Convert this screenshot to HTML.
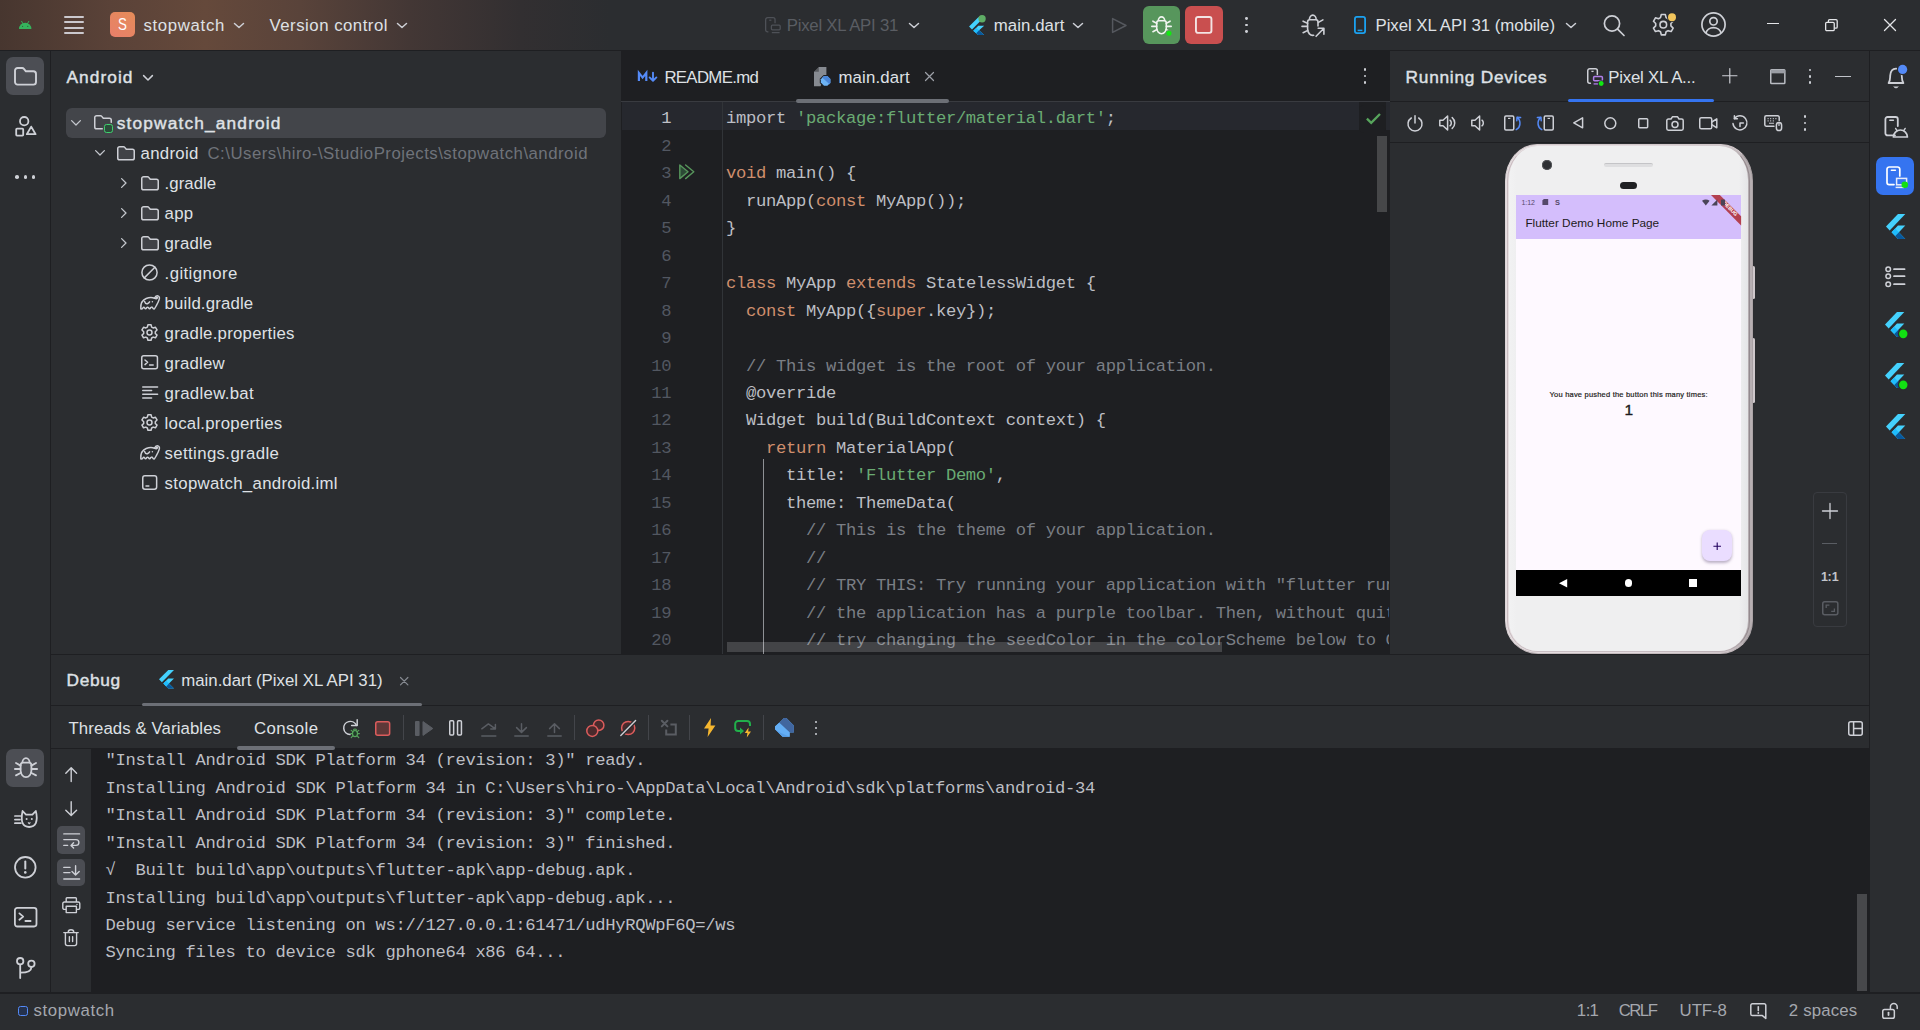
<!DOCTYPE html>
<html><head><meta charset="utf-8"><title>stopwatch - main.dart</title>
<style>
html,body{margin:0;padding:0;background:#2b2d30;overflow:hidden}
body{width:1920px;height:1030px;position:relative;font-family:"Liberation Sans",sans-serif;color:#dfe1e5}
.b{position:absolute;display:block}
.t{position:absolute;white-space:pre;line-height:24px;height:24px;font-family:"Liberation Sans",sans-serif}
.m{font-family:"Liberation Mono",monospace}
.k{color:#cf8e6d}.s{color:#6aab73}.c{color:#7a7e85}
svg{overflow:visible}
</style></head><body>
<div class="b" style="left:0px;top:0px;width:1920px;height:50px;background:#2b2d30;background:linear-gradient(90deg,#47362f 0px,#5a4238 110px,#65493b 205px,#59433a 300px,#433735 410px,#322f31 520px,#2b2d30 610px)"></div>
<div class="b" style="left:0px;top:50px;width:1920px;height:1px;background:#1e1f22;"></div>
<div class="b" style="left:0px;top:51px;width:50px;height:942px;background:#2b2d30;"></div>
<div class="b" style="left:50px;top:51px;width:1px;height:942px;background:#1e1f22;"></div>
<div class="b" style="left:1870px;top:51px;width:50px;height:942px;background:#2b2d30;"></div>
<div class="b" style="left:1869px;top:51px;width:1px;height:942px;background:#1e1f22;"></div>
<div class="b" style="left:51px;top:51px;width:570px;height:603px;background:#2b2d30;"></div>
<div class="b" style="left:621px;top:51px;width:769px;height:603px;background:#1e1f22;"></div>
<div class="b" style="left:621px;top:101px;width:769px;height:1px;background:#393b40;"></div>
<div class="b" style="left:1390px;top:51px;width:479px;height:603px;background:#2b2d30;"></div>
<div class="b" style="left:1390px;top:101px;width:479px;height:1px;background:#1e1f22;"></div>
<div class="b" style="left:1390px;top:142.3px;width:479px;height:1px;background:#1e1f22;"></div>
<div class="b" style="left:51px;top:654px;width:1818px;height:1px;background:#1e1f22;"></div>
<div class="b" style="left:51px;top:655px;width:1818px;height:338px;background:#2b2d30;"></div>
<div class="b" style="left:51px;top:705px;width:1818px;height:1px;background:#1e1f22;"></div>
<div class="b" style="left:51px;top:748px;width:1818px;height:1px;background:#1e1f22;"></div>
<div class="b" style="left:91px;top:749px;width:1778px;height:244px;background:#1e1f22;"></div>
<div class="b" style="left:0px;top:992px;width:1920px;height:2px;background:#1e1f22;"></div>
<div class="b" style="left:0px;top:993.5px;width:1920px;height:36.5px;background:#2b2d30;"></div>
<svg class="b" style="left:18.8px;top:21px;" width="12.4" height="8" viewBox="0 0 12.4 8" fill="none"><path d="M0 8 A6.2 6.2 0 0 1 12.4 8 Z" fill="#35b35c"></path><path d="M2.6 0.3 L4 2.8 M9.8 0.3 L8.4 2.8" stroke="#35b35c" stroke-width="0.9" stroke-linecap="round"></path><circle cx="3.6" cy="5.3" r="0.6" fill="#2a5a3a"></circle><circle cx="8.8" cy="5.3" r="0.6" fill="#2a5a3a"></circle></svg>
<div class="b" style="left:63.8px;top:15.600000000000001px;width:20px;height:2px;background:#cbc8cd;border-radius:1px"></div>
<div class="b" style="left:63.8px;top:21.2px;width:20px;height:2px;background:#cbc8cd;border-radius:1px"></div>
<div class="b" style="left:63.8px;top:26.8px;width:20px;height:2px;background:#cbc8cd;border-radius:1px"></div>
<div class="b" style="left:63.8px;top:32.4px;width:20px;height:2px;background:#cbc8cd;border-radius:1px"></div>
<div class="b" style="left:110px;top:12px;width:25px;height:25px;background:#e8825e;border-radius:5px;background:linear-gradient(35deg,#e87f6b,#e58c58)"></div>
<span class="t" style="left:117.6px;top:12.5px;font-size:16.6px;color:#fff;transform:scaleX(0.8);transform-origin:0 0">S</span>
<span class="t" style="left: 143.5px; top: 13.5px; font-size: 16.8px; color: rgb(223, 225, 229); letter-spacing: 0.655px;">stopwatch</span>
<svg class="b" style="left:234px;top:22.7px;" width="10" height="5" viewBox="0 0 10 5" fill="none"><path d="M0.5 0.5 L5.0 4.5 L9.5 0.5" stroke="#ced0d6" stroke-width="1.5" stroke-linecap="round" stroke-linejoin="round"></path></svg>
<span class="t" style="left: 269.5px; top: 13.5px; font-size: 16.8px; color: rgb(223, 225, 229); letter-spacing: 0.499px;">Version control</span>
<svg class="b" style="left:397px;top:22.7px;" width="10" height="5" viewBox="0 0 10 5" fill="none"><path d="M0.5 0.5 L5.0 4.5 L9.5 0.5" stroke="#ced0d6" stroke-width="1.5" stroke-linecap="round" stroke-linejoin="round"></path></svg>
<svg class="b" style="left:764.8px;top:17px;" width="17" height="18" viewBox="0 0 17 18" fill="none"><path d="M3.4 14.9 H2.65 a2 2 0 0 1 -2 -2 V2.65 a2 2 0 0 1 2 -2 h5.4 a2 2 0 0 1 2 2 V6.2" stroke="#4e5157" stroke-width="1.3"></path><path d="M4.2 3.2 H6.4" stroke="#4e5157" stroke-width="1.2"></path><rect x="6.4" y="8.2" width="8.8" height="4.6" rx="1" stroke="#4e5157" stroke-width="1.3"></rect><path d="M6.8 15.6 H14.6" stroke="#4e5157" stroke-width="1.3"></path></svg>
<span class="t" style="left: 786.8px; top: 13.5px; font-size: 16.8px; color: rgb(90, 93, 99); letter-spacing: -0.254px;">Pixel XL API 31</span>
<svg class="b" style="left:909px;top:22.7px;" width="10" height="5" viewBox="0 0 10 5" fill="none"><path d="M0.5 0.5 L5.0 4.5 L9.5 0.5" stroke="#ced0d6" stroke-width="1.5" stroke-linecap="round" stroke-linejoin="round"></path></svg>
<svg class="b" style="left:967.6px;top:14.8px;transform:scale(1.05);transform-origin:0 0" width="18" height="19" viewBox="0 0 18 19" fill="none"><path d="M9.8 2.2 L1 11 L3.8 13.8 L15.4 2.2 Z" fill="#44d1fd"></path><path d="M9.8 10.3 L5 15.1 L9.8 19 H15.4 L10.6 14.6 L15.4 10.3 Z" fill="#44d1fd"></path><path d="M5 15.1 L7.8 12.3 L10.6 14.6 L9.8 19 Z" fill="#1fbcfd"></path><path d="M7.8 17.4 L9.8 19 H15.4 L10.6 14.6 Z" fill="#08589c"></path><circle cx="13.4" cy="3.6" r="3.5" fill="#5fad65"></circle></svg>
<span class="t" style="left: 993.8px; top: 13.5px; font-size: 16.8px; color: rgb(223, 225, 229); letter-spacing: 0.068px;">main.dart</span>
<svg class="b" style="left:1073px;top:22.7px;" width="10" height="5" viewBox="0 0 10 5" fill="none"><path d="M0.5 0.5 L5.0 4.5 L9.5 0.5" stroke="#ced0d6" stroke-width="1.5" stroke-linecap="round" stroke-linejoin="round"></path></svg>
<svg class="b" style="left:1111px;top:16.8px;" width="17" height="17" viewBox="0 0 17 17" fill="none"><path d="M1.6 1.6 L15 8.5 L1.6 15.4 Z" stroke="#55585e" stroke-width="1.5" stroke-linejoin="round"></path></svg>
<div class="b" style="left:1142.5px;top:6px;width:37.5px;height:38px;background:#57965c;border-radius:6px"></div>
<div class="b" style="left:1185px;top:6px;width:37.5px;height:38px;background:#c94f4f;border-radius:6px"></div>
<svg class="b" style="left:1150.8px;top:15.6px;" width="21" height="19" viewBox="0 0 21 19" fill="none"><path d="M5.7 7 Q5.7 4.7 7.7 4.7 H13.3 Q15.3 4.7 15.3 7 V12 A4.8 5.7 0 0 1 5.7 12 Z" stroke="#f0f4f0" stroke-width="1.6"></path><path d="M7.3 4.7 A3.2 3.8 0 0 1 13.7 4.7" stroke="#f0f4f0" stroke-width="1.6"></path><path d="M0.8 10.4 H5.6 M15.4 10.4 H20.2 M1.9 5.2 L5.8 7.4 M19.1 5.2 L15.2 7.4 M1.9 15.7 L6 13.5 M19.1 15.7 L15 13.5" stroke="#f0f4f0" stroke-width="1.6" stroke-linecap="round"></path><circle cx="18" cy="17.3" r="3.4" fill="#57965c"></circle><circle cx="18" cy="17.3" r="2.5" fill="#12e812"></circle></svg>
<svg class="b" style="left:1195.2px;top:16.1px;" width="17.4" height="17.8" viewBox="0 0 17.4 17.8" fill="none"><rect x="0.95" y="0.95" width="15.5" height="15.9" rx="2" stroke="#f3e4e4" stroke-width="1.9"></rect></svg>
<div class="b" style="left:1244.8px;top:17.1px;width:2.8px;height:2.8px;background:#ced0d6;border-radius:50%"></div>
<div class="b" style="left:1244.8px;top:23.6px;width:2.8px;height:2.8px;background:#ced0d6;border-radius:50%"></div>
<div class="b" style="left:1244.8px;top:30.1px;width:2.8px;height:2.8px;background:#ced0d6;border-radius:50%"></div>
<svg class="b" style="left:1300.6px;top:13.6px;" width="24" height="23" viewBox="0 0 24 23" fill="none"><path d="M17 12 V8 Q17 5.7 15 5.7 H8.6 Q6.6 5.7 6.6 8 V15 A5.2 6.3 0 0 0 12.6 21.3" stroke="#ced0d6" stroke-width="1.6" stroke-linecap="round"></path><path d="M8.4 5.7 A3.4 4.6 0 0 1 15.2 5.7" stroke="#ced0d6" stroke-width="1.6"></path><path d="M1 12.4 H6.4 M2.1 7.2 L6.6 9.4 M2.1 18.7 L6.8 16.4 M21.9 5.9 L17.4 8.4" stroke="#ced0d6" stroke-width="1.6" stroke-linecap="round"></path><path d="M15.1 22.3 L22.7 14.5 M17.2 14.3 H22.9 V20.2" stroke="#ced0d6" stroke-width="1.6" stroke-linecap="round" stroke-linejoin="round"></path></svg>
<svg class="b" style="left:1354px;top:16px;" width="12" height="18" viewBox="0 0 12 18" fill="none"><rect x="0.9" y="0.9" width="10.2" height="16.2" rx="2" stroke="#1ba1f0" stroke-width="1.8"></rect><path d="M3.6 14.4 H8.4" stroke="#1ba1f0" stroke-width="1.5"></path></svg>
<span class="t" style="left: 1375.5px; top: 13.5px; font-size: 16.8px; color: rgb(223, 225, 229); letter-spacing: -0.036px;">Pixel XL API 31 (mobile)</span>
<svg class="b" style="left:1566px;top:22.7px;" width="10" height="5" viewBox="0 0 10 5" fill="none"><path d="M0.5 0.5 L5.0 4.5 L9.5 0.5" stroke="#ced0d6" stroke-width="1.5" stroke-linecap="round" stroke-linejoin="round"></path></svg>
<svg class="b" style="left:1603px;top:14px;" width="22" height="22" viewBox="0 0 22 22" fill="none"><circle cx="9" cy="9.5" r="7.6" stroke="#ced0d6" stroke-width="1.7"></circle><path d="M14.6 15.2 L21 21.5" stroke="#ced0d6" stroke-width="1.7" stroke-linecap="round"></path></svg>
<svg class="b" style="left:1652px;top:13px;" width="24" height="24" viewBox="0 0 24 24" fill="none"><path d="M9.3 1.5 h4 l0.8 3.1 l2 1.15 l3.05-0.9 l2 3.45 l-2.25 2.25 v2.3 l2.25 2.25 l-2 3.45 l-3.05-0.9 l-2 1.15 l-0.8 3.1 h-4 l-0.8-3.1 l-2-1.15 l-3.05 0.9 l-2-3.45 l2.25-2.25 v-2.3 l-2.25-2.25 l2-3.45 l3.05 0.9 l2-1.15 Z" stroke="#ced0d6" stroke-width="1.6" stroke-linejoin="round"></path><circle cx="11.3" cy="11.7" r="3.3" stroke="#ced0d6" stroke-width="1.6"></circle><circle cx="20" cy="4.3" r="5" fill="#2b2d30"></circle><circle cx="20" cy="4.3" r="4" fill="#f2c55c"></circle></svg>
<svg class="b" style="left:1701px;top:12px;" width="25" height="25" viewBox="0 0 25 25" fill="none"><circle cx="12.5" cy="12.5" r="11.6" stroke="#ced0d6" stroke-width="1.7"></circle><circle cx="12.5" cy="9.3" r="3.7" stroke="#ced0d6" stroke-width="1.7"></circle><path d="M5 21 a7.6 6.4 0 0 1 15 0" stroke="#ced0d6" stroke-width="1.7"></path></svg>
<div class="b" style="left:1767px;top:22.8px;width:12.3px;height:1.3px;background:#e4e5e8;"></div>
<svg class="b" style="left:1824.5px;top:18.5px;" width="13" height="12.5" viewBox="0 0 13 12.5" fill="none"><rect x="0.65" y="3.3" width="8.6" height="8.4" rx="1.2" stroke="#e4e5e8" stroke-width="1.3"></rect><path d="M3.4 3 V1.9 a1.2 1.2 0 0 1 1.2 -1.2 H11 a1.2 1.2 0 0 1 1.2 1.2 V8 a1.2 1.2 0 0 1 -1.2 1.2 H9.6" stroke="#e4e5e8" stroke-width="1.3"></path></svg>
<svg class="b" style="left:1884px;top:18.8px;" width="12" height="12" viewBox="0 0 12 12" fill="none"><path d="M0.5 0.5 L11.5 11.5 M11.5 0.5 L0.5 11.5" stroke="#e4e5e8" stroke-width="1.3" stroke-linecap="round"></path></svg>
<div class="b" style="left:6px;top:57px;width:38px;height:38px;background:#4c4e54;border-radius:7px"></div>
<svg class="b" style="left:14px;top:67px;" width="23" height="18.6" viewBox="0 0 23 18.6" fill="none"><path d="M1 3.6 a2.6 2.6 0 0 1 2.6 -2.6 h4.6 a2.2 2.2 0 0 1 1.7 0.8 l2 2.5 h7.5 a2.6 2.6 0 0 1 2.6 2.6 v8.1 a2.6 2.6 0 0 1 -2.6 2.6 h-15.8 a2.6 2.6 0 0 1 -2.6 -2.6 Z" stroke="#ced0d6" stroke-width="1.9" stroke-linejoin="round"></path></svg>
<svg class="b" style="left:15px;top:116px;" width="22" height="21" viewBox="0 0 22 21" fill="none"><circle cx="9.2" cy="5.2" r="4.2" stroke="#ced0d6" stroke-width="1.8"></circle><rect x="1.2" y="12.6" width="7" height="7" rx="0.8" stroke="#ced0d6" stroke-width="1.8"></rect><path d="M16.2 10.6 L20.6 18.2 H11.8 Z" stroke="#ced0d6" stroke-width="1.8" stroke-linejoin="round"></path></svg>
<div class="b" style="left:15.2px;top:175.1px;width:3.6px;height:3.6px;background:#ced0d6;border-radius:50%"></div>
<div class="b" style="left:23.5px;top:175.1px;width:3.6px;height:3.6px;background:#ced0d6;border-radius:50%"></div>
<div class="b" style="left:31.8px;top:175.1px;width:3.6px;height:3.6px;background:#ced0d6;border-radius:50%"></div>
<span class="t" style="left: 66.5px; top: 65px; font-size: 17.3px; color: rgb(223, 225, 229); -webkit-text-stroke: 0.43px; letter-spacing: 1.07px;">Android</span>
<svg class="b" style="left:143px;top:74.5px;" width="10" height="5.6" viewBox="0 0 10 5.6" fill="none"><path d="M0.6 0.6 L5 5 L9.4 0.6" stroke="#ced0d6" stroke-width="1.5" stroke-linecap="round" stroke-linejoin="round"></path></svg>
<div class="b" style="left:66px;top:107.5px;width:540px;height:30px;background:#43454a;border-radius:6px"></div>
<svg class="b" style="left:71.3px;top:120.0px;" width="10" height="5.6" viewBox="0 0 10 5.6" fill="none"><path d="M0.6 0.6 L5 5 L9.4 0.6" stroke="#c4c7cd" stroke-width="1.3" stroke-linecap="round" stroke-linejoin="round"></path></svg>
<svg class="b" style="left:94.2px;top:115.3px;" width="18" height="14.6" viewBox="0 0 18 14.6" fill="none"><path d="M0.75 2.6 a1.85 1.85 0 0 1 1.85 -1.85 h3.9 a1.6 1.6 0 0 1 1.25 0.6 l1.55 1.9 h6.1 a1.85 1.85 0 0 1 1.85 1.85 v6.9 a1.85 1.85 0 0 1 -1.85 1.85 h-12.8 a1.85 1.85 0 0 1 -1.85 -1.85 Z" fill="#404247" stroke="#ced0d6" stroke-width="1.5" stroke-linecap="round" stroke-linejoin="round"></path></svg>
<div class="b" style="left:104.2px;top:124.3px;width:8.8px;height:8.6px;background:#2b4d3a;border:1.5px solid #3fcf6e;border-radius:2.5px;box-sizing:border-box;box-shadow:0 0 0 1.2px #43454a"></div>
<span class="t" style="left: 116.7px; top: 111px; font-size: 17.3px; color: rgb(223, 225, 229); -webkit-text-stroke: 0.43px; letter-spacing: 1.17px;">stopwatch_android</span>
<svg class="b" style="left:95px;top:150.0px;" width="10" height="5.6" viewBox="0 0 10 5.6" fill="none"><path d="M0.6 0.6 L5 5 L9.4 0.6" stroke="#c4c7cd" stroke-width="1.3" stroke-linecap="round" stroke-linejoin="round"></path></svg>
<svg class="b" style="left:117px;top:145.5px;" width="18" height="14.6" viewBox="0 0 18 14.6" fill="none"><path d="M0.75 2.6 a1.85 1.85 0 0 1 1.85 -1.85 h3.9 a1.6 1.6 0 0 1 1.25 0.6 l1.55 1.9 h6.1 a1.85 1.85 0 0 1 1.85 1.85 v6.9 a1.85 1.85 0 0 1 -1.85 1.85 h-12.8 a1.85 1.85 0 0 1 -1.85 -1.85 Z" fill="#404247" stroke="#ced0d6" stroke-width="1.5" stroke-linecap="round" stroke-linejoin="round"></path></svg>
<span class="t" style="left: 140.5px; top: 141.5px; font-size: 16.8px; color: rgb(223, 225, 229); letter-spacing: 0.303px;">android</span>
<span class="t" style="left: 207.5px; top: 141.5px; font-size: 16.8px; color: rgb(111, 115, 122); letter-spacing: 0.495px;">C:\Users\hiro-\StudioProjects\stopwatch\android</span>
<svg class="b" style="left:121px;top:177.7px;" width="5.6" height="10" viewBox="0 0 5.6 10" fill="none"><path d="M0.6 0.6 L5 5 L0.6 9.4" stroke="#c4c7cd" stroke-width="1.3" stroke-linecap="round" stroke-linejoin="round"></path></svg>
<svg class="b" style="left:141.2px;top:175.5px;" width="18" height="14.6" viewBox="0 0 18 14.6" fill="none"><path d="M0.75 2.6 a1.85 1.85 0 0 1 1.85 -1.85 h3.9 a1.6 1.6 0 0 1 1.25 0.6 l1.55 1.9 h6.1 a1.85 1.85 0 0 1 1.85 1.85 v6.9 a1.85 1.85 0 0 1 -1.85 1.85 h-12.8 a1.85 1.85 0 0 1 -1.85 -1.85 Z" fill="#404247" stroke="#ced0d6" stroke-width="1.5" stroke-linecap="round" stroke-linejoin="round"></path></svg>
<span class="t" style="left: 164.6px; top: 171.5px; font-size: 16.8px; color: rgb(223, 225, 229); letter-spacing: 0.048px;">.gradle</span>
<svg class="b" style="left:121px;top:207.7px;" width="5.6" height="10" viewBox="0 0 5.6 10" fill="none"><path d="M0.6 0.6 L5 5 L0.6 9.4" stroke="#c4c7cd" stroke-width="1.3" stroke-linecap="round" stroke-linejoin="round"></path></svg>
<svg class="b" style="left:141.2px;top:205.5px;" width="18" height="14.6" viewBox="0 0 18 14.6" fill="none"><path d="M0.75 2.6 a1.85 1.85 0 0 1 1.85 -1.85 h3.9 a1.6 1.6 0 0 1 1.25 0.6 l1.55 1.9 h6.1 a1.85 1.85 0 0 1 1.85 1.85 v6.9 a1.85 1.85 0 0 1 -1.85 1.85 h-12.8 a1.85 1.85 0 0 1 -1.85 -1.85 Z" fill="#404247" stroke="#ced0d6" stroke-width="1.5" stroke-linecap="round" stroke-linejoin="round"></path></svg>
<span class="t" style="left: 164.6px; top: 201.5px; font-size: 16.8px; color: rgb(223, 225, 229); letter-spacing: 0.2px;">app</span>
<svg class="b" style="left:121px;top:237.7px;" width="5.6" height="10" viewBox="0 0 5.6 10" fill="none"><path d="M0.6 0.6 L5 5 L0.6 9.4" stroke="#c4c7cd" stroke-width="1.3" stroke-linecap="round" stroke-linejoin="round"></path></svg>
<svg class="b" style="left:141.2px;top:235.5px;" width="18" height="14.6" viewBox="0 0 18 14.6" fill="none"><path d="M0.75 2.6 a1.85 1.85 0 0 1 1.85 -1.85 h3.9 a1.6 1.6 0 0 1 1.25 0.6 l1.55 1.9 h6.1 a1.85 1.85 0 0 1 1.85 1.85 v6.9 a1.85 1.85 0 0 1 -1.85 1.85 h-12.8 a1.85 1.85 0 0 1 -1.85 -1.85 Z" fill="#404247" stroke="#ced0d6" stroke-width="1.5" stroke-linecap="round" stroke-linejoin="round"></path></svg>
<span class="t" style="left: 164.6px; top: 231.5px; font-size: 16.8px; color: rgb(223, 225, 229); letter-spacing: 0.189px;">gradle</span>
<span class="t" style="left: 164.6px; top: 261.5px; font-size: 16.8px; color: rgb(223, 225, 229); letter-spacing: 0.406px;">.gitignore</span>
<svg class="b" style="left:141.4px;top:264.1px;" width="17" height="17" viewBox="0 0 17 17" fill="none"><circle cx="8.5" cy="8.5" r="7.6" stroke="#ced0d6" stroke-width="1.5" stroke-linecap="round" stroke-linejoin="round"></circle><path d="M3.3 13.9 L13.9 3.3" stroke="#ced0d6" stroke-width="1.5" stroke-linecap="round" stroke-linejoin="round"></path></svg>
<span class="t" style="left: 164.6px; top: 291.5px; font-size: 16.8px; color: rgb(223, 225, 229); letter-spacing: 0.165px;">build.gradle</span>
<svg class="b" style="left:140.1px;top:295.1px;" width="20" height="15" viewBox="0 0 20 15" fill="none"><path d="M0.8 13.9 C0.4 9.2 2.4 5 6.2 3.5 C9.2 2.3 12.4 2.3 14.6 3.3 C15.2 1.6 16.6 0.6 18 0.9 C19.4 1.3 19.7 2.8 19.2 4.4 C18.6 6.6 17.6 8.4 16.6 10.2 C15.8 11.6 15.2 12.8 14.4 13.9 Q13.3 14.3 12.6 12.7 Q11.6 11.5 10.6 12.8 Q9.6 14.5 8.6 12.8 Q7.6 11.5 6.6 12.8 Q5.6 14.5 4.6 12.8 Q3.8 11.6 3 12.8 Q2 14.3 0.8 13.9 Z" stroke="#ced0d6" stroke-width="1.5" stroke-linecap="round" stroke-linejoin="round"></path><path d="M14.6 3.3 C15.8 3.9 17.4 3.8 17.5 2.8 C17.5 2.1 16.8 2 16.4 2.5" stroke="#ced0d6" stroke-width="1.5" stroke-linecap="round" stroke-linejoin="round"></path><path d="M4.6 6.4 Q5.6 9.3 7.4 8.7 Q8.9 8.1 9.6 6.9" stroke="#ced0d6" stroke-width="1.5" stroke-linecap="round" stroke-linejoin="round"></path><circle cx="12.4" cy="6.7" r="0.75" fill="#ced0d6"></circle></svg>
<span class="t" style="left: 164.6px; top: 321.5px; font-size: 16.8px; color: rgb(223, 225, 229); letter-spacing: 0.241px;">gradle.properties</span>
<svg class="b" style="left:141.3px;top:323.9px;" width="17" height="17.6" viewBox="0 0 17 17.6" fill="none"><path d="M6.95 0.75 h3.1 l0.6 2.35 l1.5 0.87 l2.33-0.67 l1.55 2.68 l-1.73 1.7 v1.74 l1.73 1.7 l-1.55 2.68 l-2.33-0.67 l-1.5 0.87 l-0.6 2.35 h-3.1 l-0.6-2.35 l-1.5-0.87 l-2.33 0.67 l-1.55-2.68 l1.73-1.7 v-1.74 l-1.73-1.7 l1.55-2.68 l2.33 0.67 l1.5-0.87 Z" stroke="#ced0d6" stroke-width="1.5" stroke-linecap="round" stroke-linejoin="round"></path><circle cx="8.5" cy="8.55" r="2.5" stroke="#ced0d6" stroke-width="1.5" stroke-linecap="round" stroke-linejoin="round"></circle></svg>
<span class="t" style="left: 164.6px; top: 351.5px; font-size: 16.8px; color: rgb(223, 225, 229); letter-spacing: 0.22px;">gradlew</span>
<svg class="b" style="left:141.4px;top:355.2px;" width="17.2" height="14.6" viewBox="0 0 17.2 14.6" fill="none"><rect x="0.75" y="0.75" width="15.7" height="13.1" rx="2" stroke="#ced0d6" stroke-width="1.5" stroke-linecap="round" stroke-linejoin="round"></rect><path d="M4 5 L6.6 7.3 L4 9.6 M8.6 10 H12.2" stroke="#ced0d6" stroke-width="1.5" stroke-linecap="round" stroke-linejoin="round"></path></svg>
<span class="t" style="left: 164.6px; top: 381.5px; font-size: 16.8px; color: rgb(223, 225, 229); letter-spacing: 0.326px;">gradlew.bat</span>
<svg class="b" style="left:141.6px;top:386.1px;" width="16.4" height="13" viewBox="0 0 16.4 13" fill="none"><path d="M0.75 0.9 H15.6 M0.75 4.6 H9.6 M0.75 8.3 H15.6 M0.75 12 H9.6" stroke="#ced0d6" stroke-width="1.5" stroke-linecap="round" stroke-linejoin="round"></path></svg>
<span class="t" style="left: 164.6px; top: 411.5px; font-size: 16.8px; color: rgb(223, 225, 229); letter-spacing: 0.252px;">local.properties</span>
<svg class="b" style="left:141.3px;top:413.9px;" width="17" height="17.6" viewBox="0 0 17 17.6" fill="none"><path d="M6.95 0.75 h3.1 l0.6 2.35 l1.5 0.87 l2.33-0.67 l1.55 2.68 l-1.73 1.7 v1.74 l1.73 1.7 l-1.55 2.68 l-2.33-0.67 l-1.5 0.87 l-0.6 2.35 h-3.1 l-0.6-2.35 l-1.5-0.87 l-2.33 0.67 l-1.55-2.68 l1.73-1.7 v-1.74 l-1.73-1.7 l1.55-2.68 l2.33 0.67 l1.5-0.87 Z" stroke="#ced0d6" stroke-width="1.5" stroke-linecap="round" stroke-linejoin="round"></path><circle cx="8.5" cy="8.55" r="2.5" stroke="#ced0d6" stroke-width="1.5" stroke-linecap="round" stroke-linejoin="round"></circle></svg>
<span class="t" style="left: 164.6px; top: 441.5px; font-size: 16.8px; color: rgb(223, 225, 229); letter-spacing: 0.367px;">settings.gradle</span>
<svg class="b" style="left:140.1px;top:445.1px;" width="20" height="15" viewBox="0 0 20 15" fill="none"><path d="M0.8 13.9 C0.4 9.2 2.4 5 6.2 3.5 C9.2 2.3 12.4 2.3 14.6 3.3 C15.2 1.6 16.6 0.6 18 0.9 C19.4 1.3 19.7 2.8 19.2 4.4 C18.6 6.6 17.6 8.4 16.6 10.2 C15.8 11.6 15.2 12.8 14.4 13.9 Q13.3 14.3 12.6 12.7 Q11.6 11.5 10.6 12.8 Q9.6 14.5 8.6 12.8 Q7.6 11.5 6.6 12.8 Q5.6 14.5 4.6 12.8 Q3.8 11.6 3 12.8 Q2 14.3 0.8 13.9 Z" stroke="#ced0d6" stroke-width="1.5" stroke-linecap="round" stroke-linejoin="round"></path><path d="M14.6 3.3 C15.8 3.9 17.4 3.8 17.5 2.8 C17.5 2.1 16.8 2 16.4 2.5" stroke="#ced0d6" stroke-width="1.5" stroke-linecap="round" stroke-linejoin="round"></path><path d="M4.6 6.4 Q5.6 9.3 7.4 8.7 Q8.9 8.1 9.6 6.9" stroke="#ced0d6" stroke-width="1.5" stroke-linecap="round" stroke-linejoin="round"></path><circle cx="12.4" cy="6.7" r="0.75" fill="#ced0d6"></circle></svg>
<span class="t" style="left: 164.6px; top: 471.5px; font-size: 16.8px; color: rgb(223, 225, 229); letter-spacing: 0.302px;">stopwatch_android.iml</span>
<svg class="b" style="left:142.4px;top:475.0px;" width="15.4" height="15" viewBox="0 0 15.4 15" fill="none"><rect x="0.75" y="0.75" width="13.9" height="13.5" rx="2.2" stroke="#ced0d6" stroke-width="1.5" stroke-linecap="round" stroke-linejoin="round"></rect><path d="M4 11 H6.8" stroke="#ced0d6" stroke-width="1.5" stroke-linecap="round" stroke-linejoin="round"></path></svg>
<svg class="b" style="left:638px;top:72px;" width="20" height="9.6" viewBox="0 0 20 9.6" fill="none"><path d="M0.9 9 V0.9 L4.6 5.6 L8.3 0.9 V9" stroke="#548af7" stroke-width="2.2" stroke-linejoin="miter"></path><path d="M15 0.6 V8.4 M11.6 5.4 L15 8.8 L18.4 5.4" stroke="#548af7" stroke-width="1.9" stroke-linejoin="round" stroke-linecap="round"></path></svg>
<span class="t" style="left: 664.4px; top: 65.5px; font-size: 16.8px; color: rgb(223, 225, 229); letter-spacing: -0.673px;">README.md</span>
<svg class="b" style="left:814.4px;top:67px;" width="17" height="19.4" viewBox="0 0 17 19.4" fill="none"><path d="M0 4.8 L4.8 0 H12.4 V10 L9 12 L6.6 19.2 H0 Z" fill="#868a91"></path><path d="M0 4.8 H4.8 V0 Z" fill="#1e1f22" opacity="0.45"></path><path d="M9.6 8 h4.2 l3.6 3.6 v4.6 l-3.6 3.6 h-4.2 l-3.8-3.8 v-4.2 Z" fill="#1e1f22"></path><path d="M10 9 h3.4 l3 3 v3.8 l-3 3 h-3.4 l-3.2-3.2 v-3.4 Z" fill="#6db3f5"></path><path d="M8.2 10.4 L15.8 17.6 L16.4 15.8 V12 L13.4 9 h-3.4 Z" fill="#4a86d8"></path></svg>
<span class="t" style="left: 838.4px; top: 65.5px; font-size: 16.8px; color: rgb(223, 225, 229); letter-spacing: 0.156px;">main.dart</span>
<svg class="b" style="left:924.6px;top:71.6px;" width="9" height="9" viewBox="0 0 9 9" fill="none"><path d="M0.5 0.5 L8.5 8.5 M8.5 0.5 L0.5 8.5" stroke="#9da0a8" stroke-width="1.2" stroke-linecap="round"></path></svg>
<div class="b" style="left:1363.7px;top:68.3px;width:2.6px;height:2.6px;background:#ced0d6;border-radius:50%"></div>
<div class="b" style="left:1363.7px;top:74.60000000000001px;width:2.6px;height:2.6px;background:#ced0d6;border-radius:50%"></div>
<div class="b" style="left:1363.7px;top:81.0px;width:2.6px;height:2.6px;background:#ced0d6;border-radius:50%"></div>
<div class="b" style="left:622px;top:102.3px;width:737.4px;height:27.47px;background:#26282e;"></div>
<div class="b" style="left:1359.4px;top:104.6px;width:26.4px;height:28px;background:#1e1f22;border-radius:5px"></div>
<div class="b" style="left:1385.8px;top:102.3px;width:3.8px;height:27.47px;background:#26282e;"></div>
<div class="b" style="left:722px;top:102px;width:1px;height:552px;background:#313438;"></div>
<style>.ln{text-align:right;font-size:17.2px;letter-spacing:-0.32px;line-height:28.6px;height:28px}.cl{font-size:17.2px;letter-spacing:-0.32px;line-height:28.6px;height:28px;color:#bcbec4}</style>
<div class="b" style="left:622px;top:102px;width:767px;height:552px;overflow:hidden">
<div class="b" style="left:141px;top:357.41px;width:1px;height:220px;background:#8e9095"></div>
<span class="t m ln" style="left:0;width:49.2px;top:3.30px;color:#bfc1c8">1</span>
<span class="t m cl" style="left:104px;top:3.30px">import <span class="s">'package:flutter/material.dart'</span>;</span>
<span class="t m ln" style="left:0;width:49.2px;top:30.77px;color:#525761">2</span>
<span class="t m ln" style="left:0;width:49.2px;top:58.24px;color:#525761">3</span>
<span class="t m cl" style="left:104px;top:58.24px"><span class="k">void</span> main() {</span>
<span class="t m ln" style="left:0;width:49.2px;top:85.71px;color:#525761">4</span>
<span class="t m cl" style="left:104px;top:85.71px">  runApp(<span class="k">const</span> MyApp());</span>
<span class="t m ln" style="left:0;width:49.2px;top:113.18px;color:#525761">5</span>
<span class="t m cl" style="left:104px;top:113.18px">}</span>
<span class="t m ln" style="left:0;width:49.2px;top:140.65px;color:#525761">6</span>
<span class="t m ln" style="left:0;width:49.2px;top:168.12px;color:#525761">7</span>
<span class="t m cl" style="left:104px;top:168.12px"><span class="k">class</span> MyApp <span class="k">extends</span> StatelessWidget {</span>
<span class="t m ln" style="left:0;width:49.2px;top:195.59px;color:#525761">8</span>
<span class="t m cl" style="left:104px;top:195.59px">  <span class="k">const</span> MyApp({<span class="k">super</span>.key});</span>
<span class="t m ln" style="left:0;width:49.2px;top:223.06px;color:#525761">9</span>
<span class="t m ln" style="left:0;width:49.2px;top:250.53px;color:#525761">10</span>
<span class="t m cl" style="left:104px;top:250.53px"><span class="c">  // This widget is the root of your application.</span></span>
<span class="t m ln" style="left:0;width:49.2px;top:278.00px;color:#525761">11</span>
<span class="t m cl" style="left:104px;top:278.00px">  @override</span>
<span class="t m ln" style="left:0;width:49.2px;top:305.47px;color:#525761">12</span>
<span class="t m cl" style="left:104px;top:305.47px">  Widget build(BuildContext context) {</span>
<span class="t m ln" style="left:0;width:49.2px;top:332.94px;color:#525761">13</span>
<span class="t m cl" style="left:104px;top:332.94px">    <span class="k">return</span> MaterialApp(</span>
<span class="t m ln" style="left:0;width:49.2px;top:360.41px;color:#525761">14</span>
<span class="t m cl" style="left:104px;top:360.41px">      title: <span class="s">'Flutter Demo'</span>,</span>
<span class="t m ln" style="left:0;width:49.2px;top:387.88px;color:#525761">15</span>
<span class="t m cl" style="left:104px;top:387.88px">      theme: ThemeData(</span>
<span class="t m ln" style="left:0;width:49.2px;top:415.35px;color:#525761">16</span>
<span class="t m cl" style="left:104px;top:415.35px"><span class="c">        // This is the theme of your application.</span></span>
<span class="t m ln" style="left:0;width:49.2px;top:442.82px;color:#525761">17</span>
<span class="t m cl" style="left:104px;top:442.82px"><span class="c">        //</span></span>
<span class="t m ln" style="left:0;width:49.2px;top:470.29px;color:#525761">18</span>
<span class="t m cl" style="left:104px;top:470.29px"><span class="c">        // TRY THIS: Try running your application with "flutter run". You'll see</span></span>
<span class="t m ln" style="left:0;width:49.2px;top:497.76px;color:#525761">19</span>
<span class="t m cl" style="left:104px;top:497.76px"><span class="c">        // the application has a purple toolbar. Then, without quitting the app,</span></span>
<span class="t m ln" style="left:0;width:49.2px;top:525.23px;color:#525761">20</span>
<span class="t m cl" style="left:104px;top:525.23px"><span class="c">        // try changing the seedColor in the colorScheme below to Colors.green</span></span>
</div>
<div class="b" style="left:796.4px;top:98.8px;width:152.6px;height:4px;background:#6c6f76;border-radius:2px"></div>
<svg class="b" style="left:679px;top:164px;" width="16" height="15.6" viewBox="0 0 16 15.6" fill="none"><path d="M0.8 1 L9 7.8 L0.8 14.6 Z" fill="#2c4a36" stroke="#57965c" stroke-width="1.4" stroke-linejoin="round"></path><path d="M6.6 1 L14.8 7.8 L6.6 14.6" stroke="#57965c" stroke-width="1.4" stroke-linejoin="round" stroke-linecap="round"></path></svg>
<svg class="b" style="left:1365.5px;top:113px;" width="15" height="11.4" viewBox="0 0 15 11.4" fill="none"><path d="M0.9 5.6 L5.2 9.8 L14 1" stroke="#57a55c" stroke-width="2.3"></path></svg>
<div class="b" style="left:1377.2px;top:136px;width:10px;height:75.6px;background:#464749;"></div>
<div class="b" style="left:727px;top:641.6px;width:495px;height:10.4px;background:rgba(255,255,255,0.17);"></div>
<span class="t" style="left: 1405.6px; top: 65px; font-size: 17.3px; color: rgb(223, 225, 229); -webkit-text-stroke: 0.43px; letter-spacing: 0.74px;">Running Devices</span>
<svg class="b" style="left:1586.6px;top:68.3px;" width="17" height="18" viewBox="0 0 17 18" fill="none"><path d="M3.4 15.15 H2.75 a2 2 0 0 1 -2 -2 V2.75 a2 2 0 0 1 2 -2 h5.6 a2 2 0 0 1 2 2 V6.4" stroke="#ced0d6" stroke-width="1.5" stroke-linecap="round" stroke-linejoin="round"></path><path d="M4.4 3.4 H6.6" stroke="#ced0d6" stroke-width="1.3"></path><rect x="6.6" y="8.4" width="8.8" height="4.4" rx="1" stroke="#b07fe8" stroke-width="1.5"></rect><path d="M6.6 15.9 H11.4" stroke="#a173d6" stroke-width="1.5"></path><circle cx="14.2" cy="15.5" r="3.3" fill="#2b2d30"></circle><circle cx="14.2" cy="15.5" r="2.4" fill="#12e812"></circle></svg>
<span class="t" style="left: 1608.3px; top: 65.5px; font-size: 16.8px; color: rgb(223, 225, 229); letter-spacing: -0.205px;">Pixel XL A...</span>
<div class="b" style="left:1568px;top:99px;width:146px;height:3px;background:#3574f0;border-radius:1.5px"></div>
<svg class="b" style="left:1721.7px;top:68.2px;" width="15.6" height="15.6" viewBox="0 0 15.6 15.6" fill="none"><path d="M7.8 0.6 V15 M0.6 7.8 H15" stroke="#ced0d6" stroke-width="1.15" stroke-linecap="round"></path></svg>
<svg class="b" style="left:1770px;top:68.7px;" width="15.6" height="15.2" viewBox="0 0 15.6 15.2" fill="none"><rect x="0.75" y="0.75" width="14.1" height="13.7" rx="0.8" stroke="#b9bcc2" stroke-width="1.5"></rect><rect x="0.75" y="0.75" width="14.1" height="3.6" fill="#9a9da4"></rect></svg>
<div class="b" style="left:1808.7px;top:68.7px;width:2.6px;height:2.6px;background:#ced0d6;border-radius:50%"></div>
<div class="b" style="left:1808.7px;top:75.10000000000001px;width:2.6px;height:2.6px;background:#ced0d6;border-radius:50%"></div>
<div class="b" style="left:1808.7px;top:81.4px;width:2.6px;height:2.6px;background:#ced0d6;border-radius:50%"></div>
<div class="b" style="left:1835px;top:75.5px;width:15.7px;height:1.1px;background:#c0c3c9;"></div>
<svg class="b" style="left:1406.8px;top:115.0px;" width="16" height="16" viewBox="0 0 16 16" fill="none"><path d="M4.3 3 A7 7 0 1 0 11.7 3" stroke="#ced0d6" stroke-width="1.5" stroke-linecap="round" stroke-linejoin="round"></path><path d="M8 0.8 V8" stroke="#ced0d6" stroke-width="1.5" stroke-linecap="round" stroke-linejoin="round"></path></svg>
<svg class="b" style="left:1438.8px;top:115.0px;" width="17" height="16" viewBox="0 0 17 16" fill="none"><path d="M0.8 5.2 H4 L8.6 1 V15 L4 10.8 H0.8 Z" stroke="#ced0d6" stroke-width="1.5" stroke-linecap="round" stroke-linejoin="round"></path><path d="M11 5.2 a3.6 3.6 0 0 1 0 5.6 M13.2 2.6 a7 7 0 0 1 0 10.8" stroke="#ced0d6" stroke-width="1.5" stroke-linecap="round" stroke-linejoin="round"></path></svg>
<svg class="b" style="left:1471.2px;top:115.0px;" width="14" height="16" viewBox="0 0 14 16" fill="none"><path d="M0.8 5.2 H4 L8.6 1 V15 L4 10.8 H0.8 Z" stroke="#ced0d6" stroke-width="1.5" stroke-linecap="round" stroke-linejoin="round"></path><path d="M11 5.2 a3.6 3.6 0 0 1 0 5.6" stroke="#ced0d6" stroke-width="1.5" stroke-linecap="round" stroke-linejoin="round"></path></svg>
<svg class="b" style="left:1504.0px;top:115.0px;" width="18" height="16" viewBox="0 0 18 16" fill="none"><rect x="0.75" y="1" width="9" height="14" rx="1.2" stroke="#ced0d6" stroke-width="1.5" stroke-linecap="round" stroke-linejoin="round"></rect><path d="M4 3.4 H6.4" stroke="#ced0d6" stroke-width="1.2"></path><path d="M12.2 14.6 C16.6 12.6 17.4 6 13.2 2.4 M12.8 5.8 L13 2.2 L16.6 2.6" stroke="#548af7" stroke-width="1.5" stroke-linecap="round" stroke-linejoin="round"></path></svg>
<svg class="b" style="left:1536.0px;top:115.0px;" width="18" height="16" viewBox="0 0 18 16" fill="none"><rect x="8.25" y="1" width="9" height="14" rx="1.2" stroke="#ced0d6" stroke-width="1.5" stroke-linecap="round" stroke-linejoin="round"></rect><path d="M11.6 3.4 H14" stroke="#ced0d6" stroke-width="1.2"></path><path d="M5.8 14.6 C1.4 12.6 0.6 6 4.8 2.4 M5.2 5.8 L5 2.2 L1.4 2.6" stroke="#548af7" stroke-width="1.5" stroke-linecap="round" stroke-linejoin="round"></path></svg>
<svg class="b" style="left:1573.0px;top:117.2px;" width="10.4" height="11.6" viewBox="0 0 10.4 11.6" fill="none"><path d="M9.6 0.8 V10.8 L0.8 5.8 Z" stroke="#ced0d6" stroke-width="1.5" stroke-linecap="round" stroke-linejoin="round"></path></svg>
<svg class="b" style="left:1603.9px;top:116.7px;" width="12.6" height="12.6" viewBox="0 0 12.6 12.6" fill="none"><circle cx="6.3" cy="6.3" r="5.5" stroke="#ced0d6" stroke-width="1.5" stroke-linecap="round" stroke-linejoin="round"></circle></svg>
<svg class="b" style="left:1637.8px;top:117.8px;" width="10.4" height="10.4" viewBox="0 0 10.4 10.4" fill="none"><rect x="0.75" y="0.75" width="8.9" height="8.9" rx="0.8" stroke="#ced0d6" stroke-width="1.5" stroke-linecap="round" stroke-linejoin="round"></rect></svg>
<svg class="b" style="left:1666.0px;top:115.5px;" width="18" height="15" viewBox="0 0 18 15" fill="none"><path d="M0.8 4.6 a1.6 1.6 0 0 1 1.6 -1.6 h2.6 l1.4 -2.2 h5.2 l1.4 2.2 h2.6 a1.6 1.6 0 0 1 1.6 1.6 v8 a1.6 1.6 0 0 1 -1.6 1.6 h-13.2 a1.6 1.6 0 0 1 -1.6 -1.6 Z" stroke="#ced0d6" stroke-width="1.5" stroke-linecap="round" stroke-linejoin="round"></path><circle cx="9" cy="8.4" r="3" stroke="#ced0d6" stroke-width="1.5" stroke-linecap="round" stroke-linejoin="round"></circle></svg>
<svg class="b" style="left:1698.5px;top:116.7px;" width="18.6" height="12.6" viewBox="0 0 18.6 12.6" fill="none"><rect x="0.75" y="0.75" width="12" height="11.1" rx="1.6" stroke="#ced0d6" stroke-width="1.5" stroke-linecap="round" stroke-linejoin="round"></rect><path d="M12.8 5 L17.8 1.8 V10.8 L12.8 7.6" stroke="#ced0d6" stroke-width="1.5" stroke-linecap="round" stroke-linejoin="round"></path></svg>
<svg class="b" style="left:1732.2px;top:115.0px;" width="16" height="16" viewBox="0 0 16 16" fill="none"><path d="M2.4 3.6 A7 7 0 1 1 1 8.6" stroke="#ced0d6" stroke-width="1.5" stroke-linecap="round" stroke-linejoin="round"></path><path d="M2.4 0.8 V3.8 H5.4" stroke="#ced0d6" stroke-width="1.5" stroke-linecap="round" stroke-linejoin="round"></path><path d="M8 11.4 V8 H11.4" stroke="#ced0d6" stroke-width="1.5" stroke-linecap="round" stroke-linejoin="round"></path></svg>
<svg class="b" style="left:1763.9px;top:114.8px;" width="18.6" height="16.4" viewBox="0 0 18.6 16.4" fill="none"><path d="M10 11.2 H2.2 a1.4 1.4 0 0 1 -1.4 -1.4 V2.2 a1.4 1.4 0 0 1 1.4 -1.4 h11.6 a1.4 1.4 0 0 1 1.4 1.4 V5.6" stroke="#ced0d6" stroke-width="1.5" stroke-linecap="round" stroke-linejoin="round"></path><path d="M3.6 3.6 h1 M6.2 3.6 h1 M8.8 3.6 h1 M11.4 3.6 h1 M3.6 5.9 h1 M6.2 5.9 h1 M8.8 5.9 h1 M5 8.3 H10" stroke="#ced0d6" stroke-width="1.1"></path><rect x="12.4" y="7.6" width="5.2" height="8" rx="2.6" fill="#2b2d30" stroke="#ced0d6" stroke-width="1.5" stroke-linecap="round" stroke-linejoin="round"></rect><path d="M15 7.8 V11" stroke="#ced0d6" stroke-width="1.2"></path></svg>
<div class="b" style="left:1803.5px;top:115.3px;width:2.6px;height:2.6px;background:#ced0d6;border-radius:50%"></div>
<div class="b" style="left:1803.5px;top:121.7px;width:2.6px;height:2.6px;background:#ced0d6;border-radius:50%"></div>
<div class="b" style="left:1803.5px;top:128.2px;width:2.6px;height:2.6px;background:#ced0d6;border-radius:50%"></div>
<div class="b" style="left:1390px;top:144px;width:479px;height:510px;overflow:hidden">
<div class="b" style="left:362.0px;top:122.0px;width:3px;height:32.6px;background:#cfc8cb;border-radius:1.5px"></div>
<div class="b" style="left:362.0px;top:194.0px;width:3px;height:64.6px;background:#cfc8cb;border-radius:1.5px"></div>
<div class="b" style="left:114.6px;top:0.2px;width:248.6px;height:509.4px;background:#e4dcdf;border-radius:32px 32px 33px 33px/37px 37px 33px 33px;box-sizing:border-box;border:1px solid;border-color:#d2c8cb #aaa2a5 #c4babd #ddd4d7;background:linear-gradient(90deg,#e6dfe1 0,#e3dbde 55%,#cfc7ca 90%,#b4acaf 98%,#b8b0b3 100%)"></div>
<div class="b" style="left:117.2px;top:2.0px;width:243.2px;height:505.8px;background:transparent;border-radius:30px 30px 31px 31px/35px 35px 31px 31px;box-sizing:border-box;border:1px solid;border-color:rgba(160,140,148,0.25) rgba(120,108,114,0.55) rgba(150,135,142,0.35) rgba(175,155,163,0.5)"></div>
<div class="b" style="left:118.8px;top:2.4px;width:239px;height:505px;background:#efeff0;border-radius:28px 28px 29px 29px/34px 34px 30px 30px;background:linear-gradient(90deg,#f2f2f3 0,#efeff0 8px,#efeff0 230px,#e5e5e7 239px)"></div>
<div class="b" style="left:152.2px;top:15.5px;width:10px;height:10px;background:#2e2f33;border-radius:50%;box-shadow:0 0 0 1px #55565a inset"></div>
<div class="b" style="left:214.2px;top:18.8px;width:48.7px;height:4.6px;background:#dedee0;border-radius:2px;border-top:1px solid #c4c4c7;box-sizing:border-box"></div>
<div class="b" style="left:229.8px;top:37.6px;width:17.2px;height:7.3px;background:#1f2023;border-radius:3.7px"></div>
<div class="b" style="left:126.0px;top:51.1px;width:225.1px;height:374.8px;background:#fef9ff;"></div>
<div class="b" style="left:126.0px;top:51.1px;width:225.1px;height:43.8px;background:#d4befc;"></div>
<div class="b" style="left:126.0px;top:425.8px;width:225.1px;height:26.2px;background:#000;"></div>
</div>
<span class="t" style="left:1521.40px;top:190.50px;font-size:7px;color:#55496a;">1:12</span>
<svg class="b" style="left:1542.3px;top:199px;" width="6.6" height="6" viewBox="0 0 6.6 6" fill="none"><path d="M1.8 0 H6.2 V6 H0.4 V1.6 Z" fill="#55496a"></path></svg>
<span class="t" style="left:1555.00px;top:190.50px;font-size:7.4px;color:#55496a;font-weight:700;">S</span>
<svg class="b" style="left:1707px;top:195.1px;" width="34.1" height="34" viewBox="0 0 34.1 34" fill="none"><path d="M4 0 L12.8 0 L34.1 21.3 L34.1 30.6 Z" fill="#b3404f"></path><g transform="translate(23.4 13.6) rotate(45)"><text x="0" y="1.8" font-family="Liberation Sans" font-weight="700" font-size="5" fill="#fff" text-anchor="middle">DEBUG</text></g></svg>
<svg class="b" style="left:1702px;top:198.6px;" width="24" height="7" viewBox="0 0 24 7" fill="none"><path d="M0 1.8 Q3.8 -1 7.6 1.8 L3.8 6.6 Z" fill="#4a4458"></path><path d="M9.4 6.6 L15.4 0.4 V6.6 Z" fill="#4a4458"></path><rect x="19" y="0.6" width="4" height="6" rx="0.6" fill="#4a4458"></rect></svg>
<span class="t" style="left: 1525.4px; top: 211px; font-size: 11.8px; color: rgb(29, 27, 32); letter-spacing: 0.002px;">Flutter Demo Home Page</span>
<span class="t" style="left: 1549.6px; top: 382.5px; font-size: 7.5px; color: rgb(29, 27, 32); -webkit-text-stroke: 0.19px; letter-spacing: 0.205px;">You have pushed the button this many times:</span>
<span class="t" style="left:1624.40px;top:397.50px;font-size:15.5px;color:#1d1b20;-webkit-text-stroke:0.39px;">1</span>
<div class="b" style="left:1701.8px;top:530.2px;width:30.2px;height:30.8px;background:#eaddff;border-radius:8px;box-shadow:0 1.5px 3px rgba(60,40,90,0.35)"></div>
<svg class="b" style="left:1712.8px;top:541.6px;" width="8.4" height="8.4" viewBox="0 0 8.4 8.4" fill="none"><path d="M4.2 0.4 V8 M0.4 4.2 H8" stroke="#21005d" stroke-width="1.1"></path></svg>
<svg class="b" style="left:1558.8px;top:578.6px;" width="8.4" height="8.6" viewBox="0 0 8.4 8.6" fill="none"><path d="M8.2 0 V8.6 L0 4.3 Z" fill="#fff"></path></svg>
<div class="b" style="left:1624.5px;top:579.2px;width:7.6px;height:7.6px;background:#fff;border-radius:50%"></div>
<div class="b" style="left:1689px;top:579px;width:8px;height:8px;background:#fff;"></div>
<div class="b" style="left:1812.8px;top:492.4px;width:33.8px;height:134.4px;background:transparent;border:1px solid #393b40;border-radius:4px;box-sizing:border-box"></div>
<svg class="b" style="left:1821.6px;top:502.6px;" width="16" height="16" viewBox="0 0 16 16" fill="none"><path d="M8 0.5 V15.5 M0.5 8 H15.5" stroke="#ced0d6" stroke-width="1.3" stroke-linecap="round"></path></svg>
<div class="b" style="left:1822px;top:542.9px;width:15px;height:1.3px;background:#5a5d63;"></div>
<span class="t" style="left:1820.90px;top:565.00px;font-size:12.5px;color:#c2c5cb;font-weight:700;">1</span>
<span class="t" style="left:1827.40px;top:565.00px;font-size:12.5px;color:#c2c5cb;font-weight:700;">:</span>
<span class="t" style="left:1831.70px;top:565.00px;font-size:12.5px;color:#c2c5cb;font-weight:700;">1</span>
<svg class="b" style="left:1821.6px;top:601.2px;" width="16.6" height="14.6" viewBox="0 0 16.6 14.6" fill="none"><rect x="0.75" y="0.75" width="15.1" height="13.1" rx="2" stroke="#5a5d63" stroke-width="1.5"></rect><path d="M4.2 7 V4.2 H7.4 M12.4 7.6 V10.4 H9.2" stroke="#5a5d63" stroke-width="1.3"></path></svg>
<svg class="b" style="left:1885px;top:65.5px;" width="22" height="23" viewBox="0 0 22 23" fill="none"><path d="M3.6 17 C5.4 14.6 5 12.4 5.2 9.6 C5.5 5.2 7.8 2.6 11 2.6 C14.2 2.6 16.5 5.2 16.8 9.6 C17 12.4 16.6 14.6 18.4 17 Z" stroke="#ced0d6" stroke-width="1.8" stroke-linejoin="round"></path><path d="M8.8 20.6 a2.4 2 0 0 0 4.4 0" fill="#ced0d6" stroke="#ced0d6" stroke-width="1"></path><circle cx="17.6" cy="3.4" r="5.8" fill="#2b2d30"></circle><circle cx="17.6" cy="3.4" r="4.6" fill="#548af7"></circle></svg>
<svg class="b" style="left:1884px;top:116px;" width="24" height="22" viewBox="0 0 24 22" fill="none"><path d="M11 19.4 H3.6 a2.2 2.2 0 0 1 -2.2 -2.2 V3.2 a2.2 2.2 0 0 1 2.2 -2.2 h8 a2.2 2.2 0 0 1 2.2 2.2 V10" stroke="#ced0d6" stroke-width="1.8" stroke-linecap="round"></path><path d="M5.8 4.2 H9.4" stroke="#ced0d6" stroke-width="1.5" stroke-linecap="round"></path><path d="M9.4 21 a7 7 0 0 1 14 0 Z" stroke="#ced0d6" stroke-width="1.7" stroke-linejoin="round"></path><path d="M11.6 12.4 L13 14.6 M21.2 12.4 L19.8 14.6" stroke="#ced0d6" stroke-width="1.4" stroke-linecap="round"></path></svg>
<div class="b" style="left:1876px;top:157px;width:38px;height:38px;background:#3574f0;border-radius:7px"></div>
<svg class="b" style="left:1886px;top:165.5px;" width="22" height="22" viewBox="0 0 22 22" fill="none"><path d="M8 18.6 H3.2 a2.2 2.2 0 0 1 -2.2 -2.2 V3.2 a2.2 2.2 0 0 1 2.2 -2.2 h8.4 a2.2 2.2 0 0 1 2.2 2.2 V10" stroke="#fff" stroke-width="1.7" stroke-linecap="round"></path><path d="M5.4 4.2 H9.4" stroke="#fff" stroke-width="1.5" stroke-linecap="round"></path><rect x="10.6" y="12.4" width="10" height="6.4" stroke="#e6ecfa" stroke-width="1.5" fill="#3574f0"></rect><path d="M9.6 21.4 H18" stroke="#e6ecfa" stroke-width="1.5"></path><circle cx="18.8" cy="18.8" r="3.3" fill="#12e012"></circle></svg>
<svg class="b" style="left:1886.3px;top:213.8px;transform:scale(1.05,1.1);transform-origin:0 0" width="19" height="23" viewBox="0 0 19 23" fill="none"><path d="M11.4 0 L0 11.4 L3.5 14.9 L18.4 0 Z" fill="#44d1fd"></path><path d="M11.4 10.5 L5.3 16.6 L11.4 22.7 H18.4 L12.3 16.6 L18.4 10.5 Z" fill="#44d1fd"></path><path d="M5.3 16.6 L8.8 13.1 L12.3 16.6 L8.8 20.1 Z" fill="#1fbcfd"></path><path d="M8.8 20.1 L12.3 16.6 L18.4 22.7 H11.4 Z" fill="#08589c"></path></svg>
<svg class="b" style="left:1885.2px;top:265.6px;" width="21" height="6.4" viewBox="0 0 21 6.4" fill="none"><circle cx="3.2" cy="3.2" r="2.3" stroke="#ced0d6" stroke-width="1.5"></circle><path d="M9 3.2 H19.6" stroke="#ced0d6" stroke-width="1.7" stroke-linecap="round"></path></svg>
<svg class="b" style="left:1885.2px;top:273.40000000000003px;" width="21" height="6.4" viewBox="0 0 21 6.4" fill="none"><circle cx="3.2" cy="3.2" r="2.3" stroke="#ced0d6" stroke-width="1.5"></circle><path d="M9 3.2 H19.6" stroke="#ced0d6" stroke-width="1.7" stroke-linecap="round"></path></svg>
<svg class="b" style="left:1885.2px;top:281.2px;" width="21" height="6.4" viewBox="0 0 21 6.4" fill="none"><circle cx="3.2" cy="3.2" r="2.3" stroke="#ced0d6" stroke-width="1.5"></circle><path d="M9 3.2 H19.6" stroke="#ced0d6" stroke-width="1.7" stroke-linecap="round"></path></svg>
<svg class="b" style="left:1884.6px;top:312px;transform:scale(1.05,1.1);transform-origin:0 0" width="19" height="23" viewBox="0 0 19 23" fill="none"><path d="M11.4 0 L0 11.4 L3.5 14.9 L18.4 0 Z" fill="#44d1fd"></path><path d="M11.4 10.5 L5.3 16.6 L11.4 22.7 H18.4 L12.3 16.6 L18.4 10.5 Z" fill="#44d1fd"></path><path d="M5.3 16.6 L8.8 13.1 L12.3 16.6 L8.8 20.1 Z" fill="#1fbcfd"></path><path d="M8.8 20.1 L12.3 16.6 L18.4 22.7 H11.4 Z" fill="#08589c"></path><circle cx="17.4" cy="19.8" r="5.2" fill="#2b2d30"></circle><circle cx="17.4" cy="19.8" r="4" fill="#12e012"></circle></svg>
<svg class="b" style="left:1884.6px;top:362.6px;transform:scale(1.05,1.1);transform-origin:0 0" width="19" height="23" viewBox="0 0 19 23" fill="none"><path d="M11.4 0 L0 11.4 L3.5 14.9 L18.4 0 Z" fill="#44d1fd"></path><path d="M11.4 10.5 L5.3 16.6 L11.4 22.7 H18.4 L12.3 16.6 L18.4 10.5 Z" fill="#44d1fd"></path><path d="M5.3 16.6 L8.8 13.1 L12.3 16.6 L8.8 20.1 Z" fill="#1fbcfd"></path><path d="M8.8 20.1 L12.3 16.6 L18.4 22.7 H11.4 Z" fill="#08589c"></path><circle cx="17.4" cy="19.8" r="5.2" fill="#2b2d30"></circle><circle cx="17.4" cy="19.8" r="4" fill="#12e012"></circle></svg>
<svg class="b" style="left:1886.3px;top:413.6px;transform:scale(1.05,1.1);transform-origin:0 0" width="19" height="23" viewBox="0 0 19 23" fill="none"><path d="M11.4 0 L0 11.4 L3.5 14.9 L18.4 0 Z" fill="#44d1fd"></path><path d="M11.4 10.5 L5.3 16.6 L11.4 22.7 H18.4 L12.3 16.6 L18.4 10.5 Z" fill="#44d1fd"></path><path d="M5.3 16.6 L8.8 13.1 L12.3 16.6 L8.8 20.1 Z" fill="#1fbcfd"></path><path d="M8.8 20.1 L12.3 16.6 L18.4 22.7 H11.4 Z" fill="#08589c"></path></svg>
<div class="b" style="left:6px;top:748.5px;width:38px;height:38px;background:#4c4e54;border-radius:7px"></div>
<svg class="b" style="left:13.5px;top:756.4px;" width="24" height="23" viewBox="0 0 24 23" fill="none"><path d="M6.6 9.4 Q6.6 6.6 9 6.6 H15 Q17.4 6.6 17.4 9.4 V14.6 A5.4 6.6 0 0 1 6.6 14.6 Z" stroke="#ced0d6" stroke-width="1.8"></path><path d="M8.4 6.6 A3.6 4.4 0 0 1 15.6 6.6" stroke="#ced0d6" stroke-width="1.8"></path><path d="M0.9 13 H6.4 M17.6 13 H23.1 M2 7 L6.6 9.6 M22 7 L17.4 9.6 M2 19.4 L7 16.8 M22 19.4 L17 16.8" stroke="#ced0d6" stroke-width="1.8" stroke-linecap="round"></path></svg>
<svg class="b" style="left:14px;top:810px;" width="24" height="18" viewBox="0 0 24 18" fill="none"><path d="M8.6 1 L12 4.6 H18.4 L21.8 1 C23 5.6 23.2 9.6 21.8 13.2 C20.4 16 17.8 17 15.2 17 C12.6 17 10 16 8.6 13.2 C7.4 10 7.6 5.6 8.6 1 Z" stroke="#ced0d6" stroke-width="1.8" stroke-linejoin="round"></path><path d="M0.9 6 H6.4 M0.9 9.6 H6 M0.9 13.2 H6.8" stroke="#ced0d6" stroke-width="1.7" stroke-linecap="round"></path><circle cx="12.6" cy="9" r="1" fill="#ced0d6"></circle><circle cx="17.8" cy="9" r="1" fill="#ced0d6"></circle><path d="M14 12.4 L15.2 13.6 L16.4 12.4" stroke="#ced0d6" stroke-width="1.1"></path></svg>
<svg class="b" style="left:14px;top:856.4px;" width="22.6" height="22.6" viewBox="0 0 22.6 22.6" fill="none"><circle cx="11.3" cy="11.3" r="10.3" stroke="#ced0d6" stroke-width="1.8"></circle><path d="M11.3 5.6 V12.6" stroke="#ced0d6" stroke-width="2" stroke-linecap="round"></path><circle cx="11.3" cy="16.4" r="1.3" fill="#ced0d6"></circle></svg>
<svg class="b" style="left:14px;top:907.4px;" width="23.4" height="20.4" viewBox="0 0 23.4 20.4" fill="none"><rect x="0.9" y="0.9" width="21.6" height="18.6" rx="2.4" stroke="#ced0d6" stroke-width="1.8"></rect><path d="M5.4 6.4 L9.2 9.6 L5.4 12.8 M11.4 14 H16.6" stroke="#ced0d6" stroke-width="1.8" stroke-linecap="round" stroke-linejoin="round"></path></svg>
<svg class="b" style="left:15.6px;top:956.6px;" width="20" height="22" viewBox="0 0 20 22" fill="none"><circle cx="4.2" cy="4.2" r="3.2" stroke="#ced0d6" stroke-width="1.8"></circle><circle cx="15.4" cy="6.8" r="3.2" stroke="#ced0d6" stroke-width="1.8"></circle><path d="M4.2 7.6 V21 M15.4 10.2 C15.4 14.6 11 15.6 4.4 15.6" stroke="#ced0d6" stroke-width="1.8" stroke-linecap="round"></path></svg>
<span class="t" style="left: 66.5px; top: 668px; font-size: 17.3px; color: rgb(223, 225, 229); -webkit-text-stroke: 0.43px; letter-spacing: 0.666px;">Debug</span>
<svg class="b" style="left:158.7px;top:670.3px;" width="15" height="19.2" viewBox="0 0 15 19.2" fill="none"><path d="M9.3 0 L0 9.3 L2.9 12.2 L15 0 Z" fill="#44d1fd"></path><path d="M9.3 8.6 L4.3 13.6 L9.3 18.6 H15 L10 13.6 L15 8.6 Z" fill="#44d1fd"></path><path d="M4.3 13.6 L7.2 10.7 L10 13.6 L7.2 16.4 Z" fill="#1fbcfd"></path><path d="M7.2 16.4 L10 13.6 L15 18.6 H9.3 Z" fill="#08589c"></path></svg>
<span class="t" style="left: 181.2px; top: 668.5px; font-size: 16.8px; color: rgb(223, 225, 229); letter-spacing: 0.021px;">main.dart (Pixel XL API 31)</span>
<svg class="b" style="left:400px;top:677.2px;" width="8.4" height="8.4" viewBox="0 0 8.4 8.4" fill="none"><path d="M0.5 0.5 L7.9 7.9 M7.9 0.5 L0.5 7.9" stroke="#868a91" stroke-width="1.2" stroke-linecap="round"></path></svg>
<div class="b" style="left:141.5px;top:702.6px;width:280.5px;height:3.6px;background:#6c6f76;border-radius:2px"></div>
<span class="t" style="left: 68.5px; top: 716.5px; font-size: 16.8px; color: rgb(223, 225, 229); letter-spacing: 0.095px;">Threads &amp; Variables</span>
<span class="t" style="left: 254px; top: 716.5px; font-size: 16.8px; color: rgb(223, 225, 229); letter-spacing: 0.404px;">Console</span>
<div class="b" style="left:237px;top:746.4px;width:97.6px;height:3.4px;background:#6c6f76;border-radius:2px"></div>
<div class="b" style="left:403.0px;top:715px;width:1px;height:25px;background:#43454a;"></div>
<div class="b" style="left:573.9px;top:715px;width:1px;height:25px;background:#43454a;"></div>
<div class="b" style="left:648.0px;top:715px;width:1px;height:25px;background:#43454a;"></div>
<div class="b" style="left:688.9px;top:715px;width:1px;height:25px;background:#43454a;"></div>
<div class="b" style="left:762.9px;top:715px;width:1px;height:25px;background:#43454a;"></div>
<svg class="b" style="left:341.6px;top:719.2px;" width="18" height="19.6" viewBox="0 0 18 19.6" fill="none"><path d="M8 15.6 A6.6 6.6 0 1 1 14.4 6.4" stroke="#ced0d6" stroke-width="1.5" stroke-linecap="round"></path><path d="M15.2 0.8 V6.6 H9.6" stroke="#ced0d6" stroke-width="1.5" stroke-linejoin="round" stroke-linecap="round"></path><ellipse cx="13" cy="14.6" rx="2.5" ry="3.1" fill="#1f3a28" stroke="#57a55c" stroke-width="1.2"></ellipse><path d="M11.5 11 a1.6 1.6 0 0 1 3 0 M8.6 14.6 H10.4 M15.6 14.6 H17.4 M9.2 11.4 L10.8 12.6 M16.8 11.4 L15.2 12.6 M9.2 18.6 L10.8 16.8 M16.8 18.6 L15.2 16.8" stroke="#57a55c" stroke-width="1.1" stroke-linecap="round"></path></svg>
<svg class="b" style="left:375.3px;top:720.5px;" width="15.4" height="15" viewBox="0 0 15.4 15" fill="none"><rect x="0.75" y="0.75" width="13.9" height="13.5" rx="2" fill="#5e3838" stroke="#db5c5c" stroke-width="1.5"></rect></svg>
<svg class="b" style="left:414.8px;top:720.5px;" width="18.4" height="15" viewBox="0 0 18.4 15" fill="none"><rect x="0" y="0" width="4.6" height="15" rx="1" fill="#5a5d63"></rect><path d="M8 0.6 L17.8 7.5 L8 14.4 Z" fill="#5a5d63" stroke="#5a5d63" stroke-width="1" stroke-linejoin="round"></path></svg>
<svg class="b" style="left:449.29999999999995px;top:720.1px;" width="13.2" height="15.8" viewBox="0 0 13.2 15.8" fill="none"><rect x="0.75" y="0.75" width="3.9" height="14.3" rx="1" stroke="#ced0d6" stroke-width="1.5" stroke-linecap="round" stroke-linejoin="round"></rect><rect x="8.55" y="0.75" width="3.9" height="14.3" rx="1" stroke="#ced0d6" stroke-width="1.5" stroke-linecap="round" stroke-linejoin="round"></rect></svg>
<svg class="b" style="left:481.3px;top:723px;" width="15.6" height="13.8" viewBox="0 0 15.6 13.8" fill="none"><path d="M0.8 5.8 L7.4 0.9 L14.4 5.8 M14.4 1.4 V6 H9.8 M0.8 12.9 H14.8" stroke="#5a5d63" stroke-width="1.5" stroke-linecap="round" stroke-linejoin="round"></path></svg>
<svg class="b" style="left:513.5px;top:723px;" width="15" height="13.8" viewBox="0 0 15 13.8" fill="none"><path d="M7.5 0.8 V9 M2.6 4.6 L7.5 9.4 L12.4 4.6 M0.8 12.9 H14.2" stroke="#5a5d63" stroke-width="1.5" stroke-linecap="round" stroke-linejoin="round"></path></svg>
<svg class="b" style="left:546.5px;top:723px;" width="15" height="13.8" viewBox="0 0 15 13.8" fill="none"><path d="M7.5 9.4 V1.2 M2.6 5.6 L7.5 0.8 L12.4 5.6 M0.8 12.9 H14.2" stroke="#5a5d63" stroke-width="1.5" stroke-linecap="round" stroke-linejoin="round"></path></svg>
<svg class="b" style="left:586px;top:719px;" width="19" height="18" viewBox="0 0 19 18" fill="none"><circle cx="12.7" cy="6.2" r="5.2" fill="#4a2a2c" stroke="#db5c5c" stroke-width="1.5"></circle><circle cx="6.3" cy="11.9" r="5.5" fill="#4a2a2c" stroke="#db5c5c" stroke-width="1.5"></circle></svg>
<svg class="b" style="left:620px;top:720px;" width="16.4" height="16" viewBox="0 0 16.4 16" fill="none"><circle cx="8.2" cy="8" r="6.6" fill="#4a2a2c" stroke="#db5c5c" stroke-width="1.5"></circle><path d="M0.8 15.4 L15.6 0.6" stroke="#2b2d30" stroke-width="4"></path><path d="M0.8 15.4 L15.6 0.6" stroke="#ced0d6" stroke-width="1.4" stroke-linecap="round"></path></svg>
<svg class="b" style="left:661px;top:720.2px;" width="16" height="15.4" viewBox="0 0 16 15.4" fill="none"><path d="M0.8 0.8 L6.4 6.4 M6.4 0.8 L0.8 6.4" stroke="#5a5d63" stroke-width="2" stroke-linecap="round"></path><path d="M9.4 4.6 H14.8 V14.4 H5.2 V9.4" stroke="#5a5d63" stroke-width="2"></path></svg>
<svg class="b" style="left:703.8px;top:718px;" width="11.6" height="19" viewBox="0 0 11.6 19" fill="none"><path d="M7 0 L0 10.6 H4.6 L3.6 19 L11.4 7.4 H6.6 Z" fill="#f5b62f"></path></svg>
<svg class="b" style="left:733.6px;top:720px;" width="18" height="17.6" viewBox="0 0 18 17.6" fill="none"><path d="M16 6 V4 a3 3 0 0 0 -3 -3 H4.2 a3 3 0 0 0 -3 3 V8 a3 3 0 0 0 3 3 H9" stroke="#21b04b" stroke-width="2"></path><path d="M6 7.4 L10 11 L6 14.6 Z" fill="#21b04b"></path><path d="M14.6 7.6 L10.8 13 H13.4 L12.8 17.6 L17 11.6 H14.2 Z" fill="#f5b62f"></path></svg>
<svg class="b" style="left:774.6px;top:718.4px;" width="18.8" height="18.8" viewBox="0 0 18.8 18.8" fill="none"><path d="M4.2 4.8 L9 0 H11.4 L18.8 7.4 V14.6 H14.6 V18.8 H7.6 L0 11.2 V8.6 Z" fill="#5da7ee"></path><path d="M4.2 4.8 L9 0 H11.4 L18.8 7.4 V14.6 H14.6 Z" fill="#41669f"></path><path d="M4.2 4.8 L14.6 14.6 V18.8 H7.6 L0 11.2 V8.6 Z" fill="#64aef5"></path><path d="M0 11.2 L7.6 18.8 H14.6 L4.2 14.2 Z" fill="#4b8fd8" opacity="0.55"></path></svg>
<div class="b" style="left:814.7px;top:720.6px;width:2.6px;height:2.6px;background:#ced0d6;border-radius:50%"></div>
<div class="b" style="left:814.7px;top:726.7px;width:2.6px;height:2.6px;background:#ced0d6;border-radius:50%"></div>
<div class="b" style="left:814.7px;top:732.8000000000001px;width:2.6px;height:2.6px;background:#ced0d6;border-radius:50%"></div>
<svg class="b" style="left:1847.5px;top:721px;" width="15" height="15" viewBox="0 0 15 15" fill="none"><rect x="0.75" y="0.75" width="13.5" height="13.5" rx="2" stroke="#ced0d6" stroke-width="1.5" stroke-linecap="round" stroke-linejoin="round"></rect><path d="M5.6 0.8 V14.2 M5.6 7.5 H14.2" stroke="#ced0d6" stroke-width="1.5"></path></svg>
<svg class="b" style="left:65px;top:767px;" width="12.4" height="15.4" viewBox="0 0 12.4 15.4" fill="none"><path d="M6.2 14.6 V1 M0.8 6.2 L6.2 0.8 L11.6 6.2" stroke="#ced0d6" stroke-width="1.4" stroke-linecap="round" stroke-linejoin="round"></path></svg>
<svg class="b" style="left:65px;top:800.6px;" width="12.4" height="15.4" viewBox="0 0 12.4 15.4" fill="none"><path d="M6.2 0.8 V14.4 M0.8 9.2 L6.2 14.6 L11.6 9.2" stroke="#ced0d6" stroke-width="1.4" stroke-linecap="round" stroke-linejoin="round"></path></svg>
<div class="b" style="left:57.3px;top:826px;width:27.7px;height:27.6px;background:#4b4d53;border-radius:5px"></div>
<div class="b" style="left:57.3px;top:858.8px;width:27.7px;height:27.6px;background:#4b4d53;border-radius:5px"></div>
<svg class="b" style="left:62.6px;top:832.6px;" width="17.4" height="14.4" viewBox="0 0 17.4 14.4" fill="none"><path d="M0.8 0.9 H16.6 M0.8 6.6 H13 a2.9 2.9 0 0 1 0 5.8 H8.4 M0.8 12.4 H4.6 M10.6 9.8 L8 12.4 L10.6 15" stroke="#ced0d6" stroke-width="1.4" stroke-linecap="round" stroke-linejoin="round"></path></svg>
<svg class="b" style="left:62.6px;top:865px;" width="17.4" height="15" viewBox="0 0 17.4 15" fill="none"><path d="M0.8 2.4 H7 M0.8 7.6 H7 M0.8 14 H16.6 M12.6 0.8 V9.8 M9 6.4 L12.6 10 L16.2 6.4" stroke="#ced0d6" stroke-width="1.4" stroke-linecap="round" stroke-linejoin="round"></path></svg>
<svg class="b" style="left:61.8px;top:897px;" width="18.6" height="16.4" viewBox="0 0 18.6 16.4" fill="none"><path d="M4.2 5 V1.6 a0.8 0.8 0 0 1 0.8 -0.8 h8.6 a0.8 0.8 0 0 1 0.8 0.8 V5 M4.2 12.4 H2.4 a1.6 1.6 0 0 1 -1.6 -1.6 V6.6 a1.6 1.6 0 0 1 1.6 -1.6 h13.8 a1.6 1.6 0 0 1 1.6 1.6 v4.2 a1.6 1.6 0 0 1 -1.6 1.6 H14.4 M4.2 9.2 H14.4 V15.6 H4.2 Z" stroke="#ced0d6" stroke-width="1.4" stroke-linecap="round" stroke-linejoin="round"></path><circle cx="15" cy="7.4" r="0.7" fill="#ced0d6"></circle></svg>
<svg class="b" style="left:63px;top:929.4px;" width="16" height="17.6" viewBox="0 0 16 17.6" fill="none"><path d="M0.8 3.6 H15.2 M5.2 3.4 a2.8 2.6 0 0 1 5.6 0 M2.4 3.8 V14.6 a2 2 0 0 0 2 2 h7.2 a2 2 0 0 0 2 -2 V3.8 M6.4 7.6 V12.6 M9.6 7.6 V12.6" stroke="#ced0d6" stroke-width="1.4" stroke-linecap="round" stroke-linejoin="round"></path></svg>
<div class="b" style="left:91px;top:749px;width:1765px;height:243px;overflow:hidden">
<span class="t m cl" style="left:14.6px;top:-1.80px">"Install Android SDK Platform 34 (revision: 3)" ready.</span>
<span class="t m cl" style="left:14.6px;top:25.67px">Installing Android SDK Platform 34 in C:\Users\hiro-\AppData\Local\Android\sdk\platforms\android-34</span>
<span class="t m cl" style="left:14.6px;top:53.14px">"Install Android SDK Platform 34 (revision: 3)" complete.</span>
<span class="t m cl" style="left:14.6px;top:80.61px">"Install Android SDK Platform 34 (revision: 3)" finished.</span>
<span class="t m cl" style="left:14.6px;top:108.08px">√  Built build\app\outputs\flutter-apk\app-debug.apk.</span>
<span class="t m cl" style="left:14.6px;top:135.55px">Installing build\app\outputs\flutter-apk\app-debug.apk...</span>
<span class="t m cl" style="left:14.6px;top:163.02px">Debug service listening on ws://127.0.0.1:61471/udHyRQWpF6Q=/ws</span>
<span class="t m cl" style="left:14.6px;top:190.49px">Syncing files to device sdk gphone64 x86 64...</span>
</div>
<div class="b" style="left:1856.8px;top:893.5px;width:10.2px;height:97px;background:#47484b;"></div>
<div class="b" style="left:18px;top:1006.2px;width:10px;height:9.8px;background:#25324d;border:1.5px solid #548af7;border-radius:2.5px;box-sizing:border-box"></div>
<span class="t" style="left: 33.4px; top: 998.5px; font-size: 16.8px; color: rgb(164, 167, 174); letter-spacing: 0.655px;">stopwatch</span>
<span class="t" style="left:1576.80px;top:998.50px;font-size:16.8px;color:#a4a7ae;">1</span>
<span class="t" style="left:1585.70px;top:998.50px;font-size:16.8px;color:#a4a7ae;">:</span>
<span class="t" style="left:1589.60px;top:998.50px;font-size:16.8px;color:#a4a7ae;">1</span>
<span class="t" style="left: 1618.7px; top: 998.5px; font-size: 16.8px; color: rgb(164, 167, 174); letter-spacing: -1.543px;">CRLF</span>
<span class="t" style="left: 1679.6px; top: 998.5px; font-size: 16.8px; color: rgb(164, 167, 174); letter-spacing: -0.062px;">UTF-8</span>
<svg class="b" style="left:1749.8px;top:1002.8px;" width="16.6" height="16.2" viewBox="0 0 16.6 16.2" fill="none"><path d="M0.8 2.4 a1.6 1.6 0 0 1 1.6 -1.6 h11.8 a1.6 1.6 0 0 1 1.6 1.6 V15.4 L12.4 12.6 H2.4 a1.6 1.6 0 0 1 -1.6 -1.6 Z" stroke="#ced0d6" stroke-width="1.5" stroke-linejoin="round"></path><path d="M8.3 3.8 V7.6" stroke="#ced0d6" stroke-width="1.6" stroke-linecap="round"></path><circle cx="8.3" cy="10" r="0.9" fill="#ced0d6"></circle></svg>
<span class="t" style="left: 1788.8px; top: 998.5px; font-size: 16.8px; color: rgb(164, 167, 174); letter-spacing: 0.175px;">2 spaces</span>
<svg class="b" style="left:1881.6px;top:1003px;" width="17" height="16" viewBox="0 0 17 16" fill="none"><rect x="0.75" y="6.4" width="11.6" height="8.8" rx="1.8" stroke="#ced0d6" stroke-width="1.5"></rect><path d="M8.4 6.2 V4 a3.4 3.4 0 0 1 6.8 0 V5.4" stroke="#ced0d6" stroke-width="1.5" stroke-linecap="round"></path><path d="M6.5 9.6 V12" stroke="#ced0d6" stroke-width="1.8" stroke-linecap="round"></path></svg>

</body></html>
